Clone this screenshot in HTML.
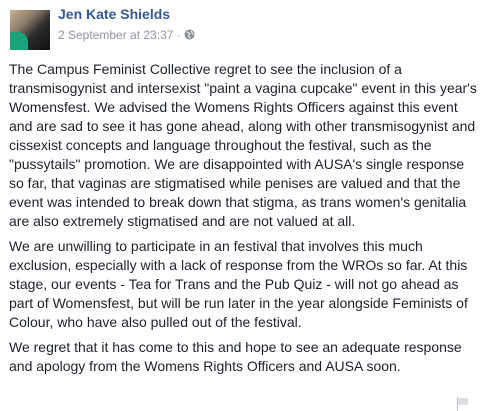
<!DOCTYPE html>
<html><head><meta charset="utf-8"><style>
body{margin:0;background:#fff;width:488px;height:411px;overflow:hidden;font-family:"Liberation Sans",Helvetica,Arial,sans-serif;}
.av{position:absolute;left:10px;top:10px;width:40px;height:40px;background:linear-gradient(135deg,#c9b48a 0%,#8a7a6a 35%,#2b2b2b 60%,#111 100%);overflow:hidden}
.av:after{content:"";position:absolute;left:0;top:22px;width:18px;height:18px;background:#1aa37a;border-radius:0 10px 0 0}
.name{position:absolute;left:58px;top:6px;font-size:14px;font-weight:bold;color:#365899}
.date{position:absolute;left:58px;top:28px;font-size:12px;color:#90949c}
.txt{position:absolute;left:9px;top:60px;width:476px;font-size:14px;line-height:19px;color:#1d2129}
.txt p{margin:0 0 6px}
</style></head><body>
<div class="av"></div>
<div class="name">Jen Kate Shields</div>
<div class="date">2 September at 23:37 · <svg width="11" height="11" viewBox="0 0 12 12" style="vertical-align:-1px"><circle cx="6" cy="6" r="5.5" fill="#90949c"/><path d="M3 3 L6 5 L5 8 L7 10 M8 2 L9 5 L10 6" stroke="#fff" fill="none" stroke-width="1"/></svg></div>
<div class="txt">
<p>The Campus Feminist Collective regret to see the inclusion of a<br>transmisogynist and intersexist "paint a vagina cupcake" event in this year's<br>Womensfest. We advised the Womens Rights Officers against this event<br>and are sad to see it has gone ahead, along with other transmisogynist and<br>cissexist concepts and language throughout the festival, such as the<br>"pussytails" promotion. We are disappointed with AUSA's single response<br>so far, that vaginas are stigmatised while penises are valued and that the<br>event was intended to break down that stigma, as trans women's genitalia<br>are also extremely stigmatised and are not valued at all.</p>
<p>We are unwilling to participate in an festival that involves this much<br>exclusion, especially with a lack of response from the WROs so far. At this<br>stage, our events - Tea for Trans and the Pub Quiz - will not go ahead as<br>part of Womensfest, but will be run later in the year alongside Feminists of<br>Colour, who have also pulled out of the festival.</p>
<p>We regret that it has come to this and hope to see an adequate response<br>and apology from the Womens Rights Officers and AUSA soon.</p>
</div>
<svg style="position:absolute;left:456px;top:397px" width="14" height="14" viewBox="0 0 14 14"><rect x="1" y="0" width="1" height="14" fill="#bec2c9"/><rect x="2" y="1" width="10" height="7" fill="#dddfe2"/></svg>
</body></html>
